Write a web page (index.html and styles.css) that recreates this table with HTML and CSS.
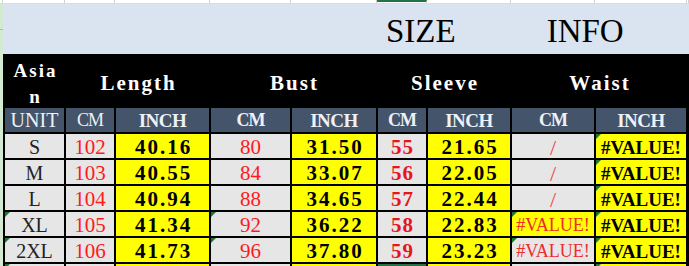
FILE: index.html
```html
<!DOCTYPE html>
<html lang="en">
<head>
<meta charset="utf-8">
<title>Size Info</title>
<link rel="stylesheet" href="styles.css">
</head>
<body>
<div class="page">
  <div class="topstrip">
    <div></div><div></div><div></div><div></div><div></div><div></div>
    <div class="sel"></div><div></div><div></div><div></div><div></div>
  </div>
  <div class="main">
    <div class="rowhead"></div>
    <div class="content">
      <div class="title"><span>SIZE</span><span class="info">INFO</span></div>
      <div class="sheet">
        <div class="c h1 asia"><span>Asia</span><span>n</span></div>
        <div class="c h1 span2">Length</div>
        <div class="c h1 span2">Bust</div>
        <div class="c h1 span2">Sleeve</div>
        <div class="c h1 span2">Waist</div>

        <div class="c h2 thin">UNIT</div>
        <div class="c h2 thin cm">CM</div>
        <div class="c h2">INCH</div>
        <div class="c h2 cm">CM</div>
        <div class="c h2">INCH</div>
        <div class="c h2 cm">CM</div>
        <div class="c h2">INCH</div>
        <div class="c h2 cm">CM</div>
        <div class="c h2">INCH</div>

        <div class="c g sz">S</div>
        <div class="c g rd">102</div>
        <div class="c y b">40.16</div>
        <div class="c g rd">80</div>
        <div class="c y b">31.50</div>
        <div class="c g rb">55</div>
        <div class="c y b">21.65</div>
        <div class="c g sl">/</div>
        <div class="c y bv tri">#VALUE!</div>

        <div class="c g sz">M</div>
        <div class="c g rd">103</div>
        <div class="c y b">40.55</div>
        <div class="c g rd">84</div>
        <div class="c y b">33.07</div>
        <div class="c g rb">56</div>
        <div class="c y b">22.05</div>
        <div class="c g sl">/</div>
        <div class="c y bv tri">#VALUE!</div>

        <div class="c g sz">L</div>
        <div class="c g rd">104</div>
        <div class="c y b">40.94</div>
        <div class="c g rd">88</div>
        <div class="c y b">34.65</div>
        <div class="c g rb">57</div>
        <div class="c y b">22.44</div>
        <div class="c g sl">/</div>
        <div class="c y bv tri">#VALUE!</div>

        <div class="c g sz tri">XL</div>
        <div class="c g rd">105</div>
        <div class="c y b">41.34</div>
        <div class="c g rd tri">92</div>
        <div class="c y b">36.22</div>
        <div class="c g rb">58</div>
        <div class="c y b">22.83</div>
        <div class="c y rv tri">#VALUE!</div>
        <div class="c y bv tri">#VALUE!</div>

        <div class="c g sz tri">2XL</div>
        <div class="c g rd">106</div>
        <div class="c y b">41.73</div>
        <div class="c g rd tri">96</div>
        <div class="c y b">37.80</div>
        <div class="c g rb">59</div>
        <div class="c y b">23.23</div>
        <div class="c g rv tri">#VALUE!</div>
        <div class="c y bv tri">#VALUE!</div>

        <div class="c g tri"></div>
        <div class="c g"></div>
        <div class="c y"></div>
        <div class="c g"></div>
        <div class="c y"></div>
        <div class="c selcell"></div>
        <div class="c y"></div>
        <div class="c g"></div>
        <div class="c y tri"></div>
      </div>
    </div>
  </div>
</div>
</body>
</html>
```

FILE: styles.css
```css
* {
  box-sizing: border-box;
  margin: 0;
  padding: 0;
}

html,
body {
  width: 689px;
  height: 266px;
  overflow: hidden;
  background: #ffffff;
}

body {
  font-family: "Liberation Serif", serif;
}

.page {
  width: 689px;
  height: 266px;
  display: flex;
  flex-direction: column;
  overflow: hidden;
}

.topstrip {
  display: grid;
  grid-template-columns: 3px 62px 50px 95px 81px 86px 50px 84px 84px 92px 2px;
  height: 4px;
  flex: none;
  background: #ffffff;
  border-bottom: 1px solid #dcdcdc;
}

.topstrip > div {
  border-right: 1px solid #d2d2d2;
}

.topstrip .sel {
  border-top: 2px solid #217346;
}

.main {
  display: flex;
  flex: 1;
  min-height: 0;
  overflow: hidden;
}

.rowhead {
  width: 3px;
  flex: none;
  background: linear-gradient(#d2e9d2 25px, #a9bfa9 25px, #a9bfa9 26px, #d2e9d2 26px);
}

.content {
  flex: 1;
  display: flex;
  flex-direction: column;
  min-width: 0;
}

.title {
  height: 50px;
  flex: none;
  background: #dae3f0;
  display: flex;
  align-items: center;
  padding: 4px 0 0 383px;
  font-size: 33px;
  line-height: 1;
  color: #000000;
}

.title .info {
  margin-left: 91px;
}

.sheet {
  display: grid;
  grid-template-columns: 59px 48px 93px 79px 84px 48px 82px 82px 90px;
  grid-template-rows: 52px repeat(7, 24px);
  gap: 2px;
  padding: 0 3px 0 2px;
  background: #000000;
}

.c {
  display: flex;
  align-items: center;
  justify-content: center;
  position: relative;
  white-space: nowrap;
  padding-top: 3px;
}

.span2 {
  grid-column: span 2;
}

.h1 {
  background: #000000;
  color: #ffffff;
  font-weight: bold;
  font-size: 21px;
  letter-spacing: 2px;
  padding-top: 7px;
  padding-left: 2px;
}

.asia {
  flex-direction: column;
  font-size: 19px;
  letter-spacing: 2px;
  line-height: 26px;
  padding-top: 8px;
}

.h2 {
  background: #44546a;
  color: #eef1f6;
  font-size: 19px;
  font-weight: bold;
  letter-spacing: -0.5px;
  padding-top: 1px;
}

.h2.cm {
  font-size: 18px;
  letter-spacing: -1px;
}

.h2.thin {
  font-weight: normal;
  font-size: 20px;
  letter-spacing: 0;
}

.h2.thin.cm {
  font-size: 18px;
  letter-spacing: -1px;
}

.g {
  background: #e7e6e6;
}

.y {
  background: #ffff00;
}

.sz {
  font-size: 20px;
  color: #222222;
}

.rd {
  color: #ff1a1a;
  font-size: 21px;
}

.b {
  font-weight: bold;
  font-size: 21px;
  letter-spacing: 2px;
  padding-left: 2px;
  color: #000000;
}

.bv {
  font-weight: bold;
  font-size: 19px;
  color: #000000;
}

.rb {
  color: #e8141b;
  font-weight: bold;
  font-size: 21px;
  letter-spacing: 1px;
  padding-left: 1px;
}

.sl {
  color: #e84848;
  font-size: 22px;
}

.rv {
  color: #f02a2a;
  font-size: 18px;
}

.selcell {
  background: #ffffff;
  box-shadow: inset 0 0 0 2px #217346;
}

.tri::before {
  content: "";
  position: absolute;
  left: 0;
  top: 0;
  border-top: 5px solid #1c7a30;
  border-right: 5px solid transparent;
}
```
